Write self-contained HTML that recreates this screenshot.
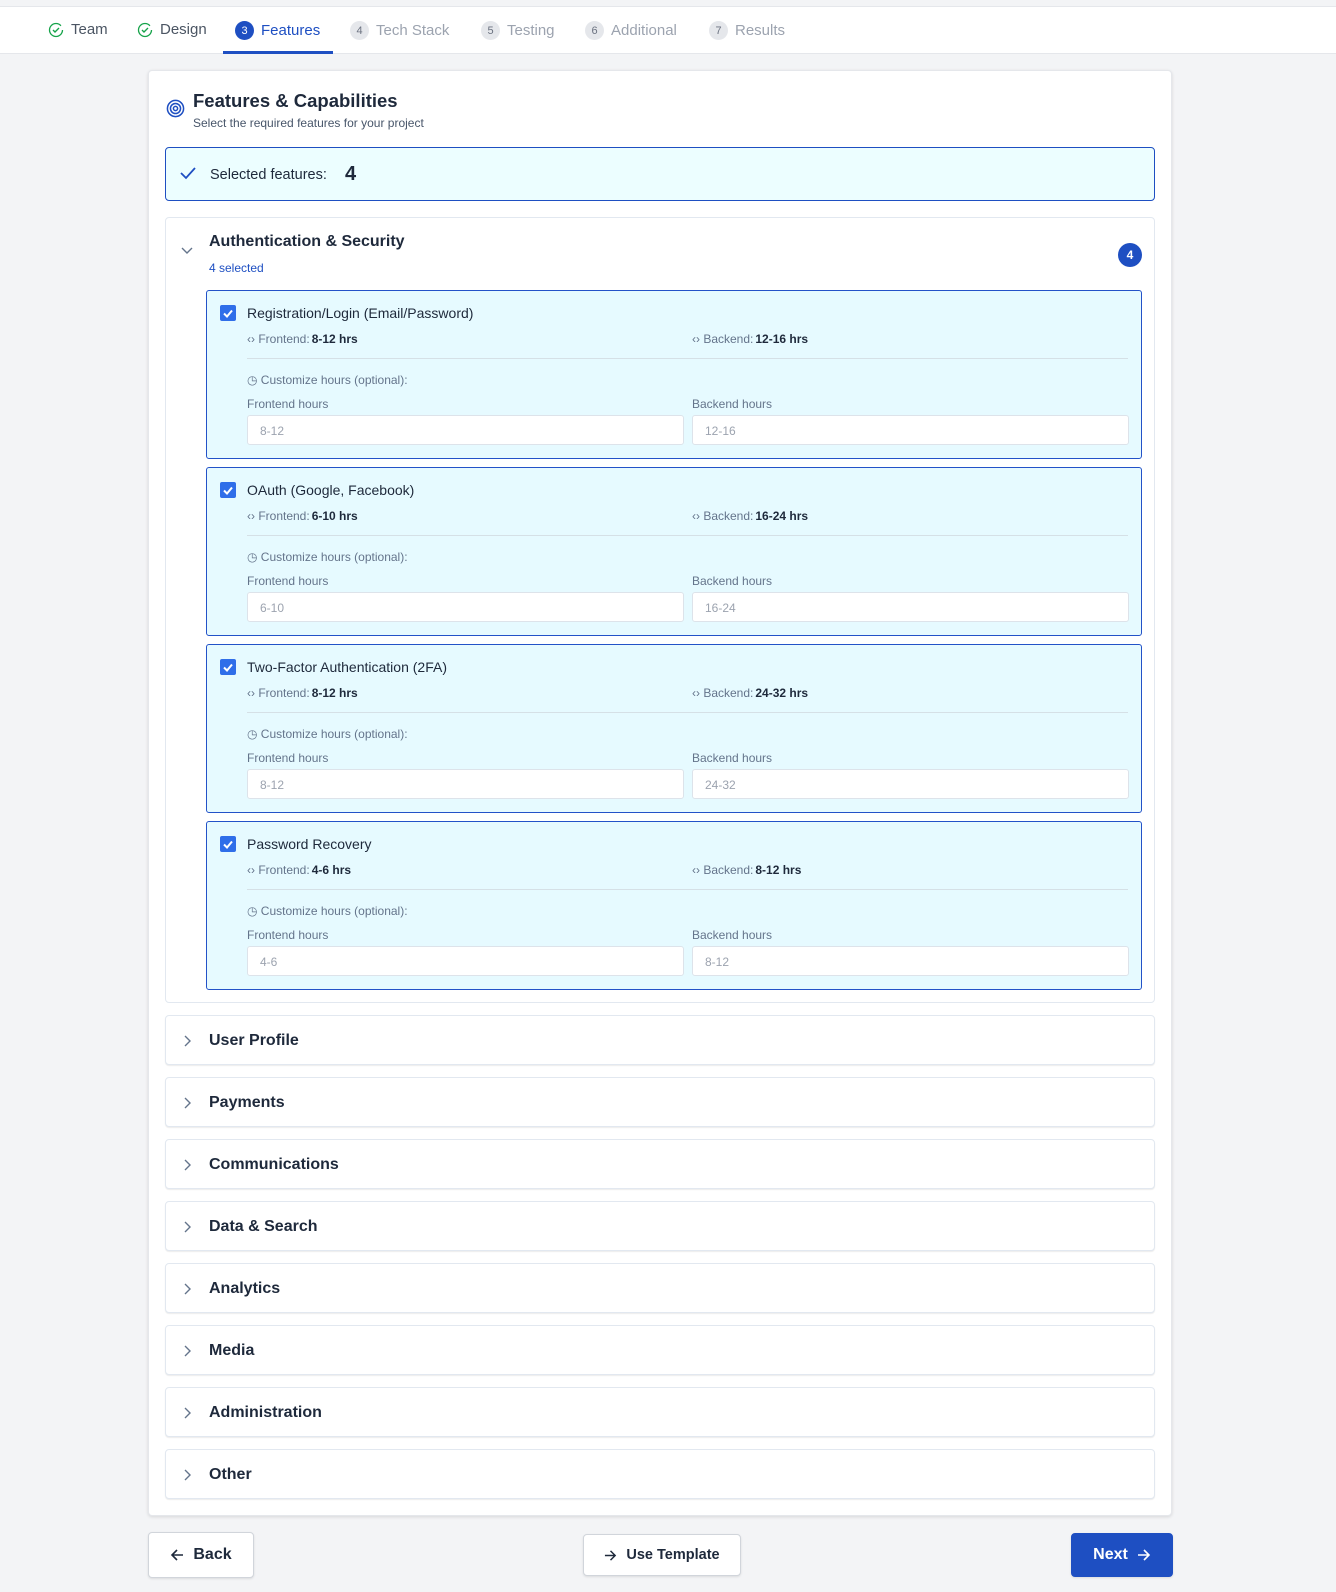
<!DOCTYPE html>
<html><head><meta charset="utf-8"><style>
*{box-sizing:border-box;margin:0;padding:0}
body{width:1336px;height:1592px;background:#f3f4f6;font-family:"Liberation Sans",Arial,sans-serif;color:#1e293b;position:relative;overflow:hidden}
.nav{position:absolute;left:0;top:0;width:1336px;background:#fff;border-top:1px solid #e5e7eb;border-bottom:1px solid #e5e7eb;margin-top:6px;height:48px}
.step{position:absolute;top:14px;font-size:15px;color:#9ca3af;display:flex;align-items:center;gap:7px;white-space:nowrap}
.num{width:19px;height:19px;border-radius:50%;background:#e5e7eb;color:#6b7280;font-size:11px;display:flex;align-items:center;justify-content:center}
.card{position:absolute;left:148px;top:70px;width:1024px;height:1446px;background:#fff;border:1px solid #e5e7eb;border-radius:4px;box-shadow:0 1px 3px rgba(0,0,0,.12)}
.abs{position:absolute}
.sel{left:165px;top:147px;width:990px;height:54px;background:#ecfeff;border:1px solid #1e4fc2;border-radius:4px}
.auth{left:165px;top:217px;width:990px;height:786px;border:1px solid #e2e8f0;border-radius:4px;background:#fff}
.item{position:absolute;left:40px;width:936px;height:169px;background:#e6faff;border:1px solid #2352c8;border-radius:3px}
.cb{position:absolute;left:13px;top:14px;width:16px;height:16px;background:#2f6ee9;border-radius:2px}
.it{position:absolute;left:40px;top:14px;font-size:14px;color:#1e293b}
.meta{position:absolute;top:41px;font-size:12px;color:#64748b}
.meta b{color:#1e293b;font-weight:600;margin-left:2px}
.div{position:absolute;left:40px;right:13px;top:67px;border-top:1px solid #d5e0e6}
.cust{position:absolute;left:40px;top:82px;font-size:12px;color:#64748b}
.lab{position:absolute;top:106px;font-size:12px;color:#64748b}
.inp{position:absolute;top:124px;width:437px;height:30px;background:#fff;border:1px solid #dde3ea;border-radius:3px;font-size:12px;color:#9ca3af;padding:8px 12px}
.col{position:absolute;left:165px;width:990px;height:50px;background:#fff;border:1px solid #e2e8f0;border-radius:4px;box-shadow:0 1px 1px rgba(0,0,0,.08)}
.col span{position:absolute;left:43px;top:16px;font-size:16px;font-weight:bold;color:#1e293b}
.col svg{position:absolute;left:16px;top:18px}
.btn{position:absolute;background:#fff;border:1px solid #d1d5db;border-radius:4px;font-size:16px;font-weight:bold;color:#1e293b;display:flex;align-items:center;justify-content:center;gap:9px;box-shadow:0 1px 2px rgba(0,0,0,.1)}
</style></head><body>
<div class="nav">
 <div class="step" style="left:48px;color:#4b5563"><svg width="16" height="16" viewBox="0 0 16 16"><circle cx="8" cy="8" r="6.5" fill="none" stroke="#16a34a" stroke-width="1.3" stroke-dasharray="36 5"/><path d="M5 8l2 2 4-4" fill="none" stroke="#16a34a" stroke-width="1.4"/></svg>Team</div>
 <div class="step" style="left:137px;color:#4b5563"><svg width="16" height="16" viewBox="0 0 16 16"><circle cx="8" cy="8" r="6.5" fill="none" stroke="#16a34a" stroke-width="1.3" stroke-dasharray="36 5"/><path d="M5 8l2 2 4-4" fill="none" stroke="#16a34a" stroke-width="1.4"/></svg>Design</div>
 <div class="step" style="left:235px;color:#1e4fc2"><span class="num" style="background:#1e4fc2;color:#fff">3</span>Features</div>
 <div class="abs" style="left:223px;top:44px;width:110px;height:3px;background:#1e4fc2"></div>
 <div class="step" style="left:350px"><span class="num">4</span>Tech Stack</div>
 <div class="step" style="left:481px"><span class="num">5</span>Testing</div>
 <div class="step" style="left:585px"><span class="num">6</span>Additional</div>
 <div class="step" style="left:709px"><span class="num">7</span>Results</div>
</div>
<div class="card"></div>
<svg class="abs" style="left:166px;top:99px" width="19" height="19" viewBox="0 0 20 20"><circle cx="10" cy="10" r="8.5" fill="none" stroke="#1e4fc2" stroke-width="1.6"/><circle cx="10" cy="10" r="5.3" fill="none" stroke="#1e4fc2" stroke-width="1.6"/><circle cx="10" cy="10" r="2.2" fill="none" stroke="#1e4fc2" stroke-width="1.6"/></svg>
<div class="abs" style="left:193px;top:90px;font-size:18.5px;font-weight:bold">Features &amp; Capabilities</div>
<div class="abs" style="left:193px;top:116px;font-size:12px;color:#475569">Select the required features for your project</div>
<div class="abs sel"><svg class="abs" style="left:14px;top:18px" width="16" height="14" viewBox="0 0 16 14"><path d="M1 7l5 5L15 2" fill="none" stroke="#1e4fc2" stroke-width="1.8"/></svg><span class="abs" style="left:44px;top:19px;font-size:14.5px">Selected features:</span><span class="abs" style="left:179px;top:15px;font-size:20px;font-weight:bold">4</span></div>
<div class="abs auth">
 <svg class="abs" style="left:14px;top:28px" width="14" height="10" viewBox="0 0 14 10"><path d="M2 2l5 5 5-5" fill="none" stroke="#64748b" stroke-width="1.4"/></svg>
 <div class="abs" style="left:43px;top:15px;font-size:16px;font-weight:bold">Authentication &amp; Security</div>
 <div class="abs" style="left:43px;top:43px;font-size:12px;color:#1e4fc2">4 selected</div>
 <div class="abs" style="left:952px;top:25px;width:24px;height:24px;border-radius:50%;background:#1e4fc2;color:#fff;font-size:12px;font-weight:bold;display:flex;align-items:center;justify-content:center">4</div>
 <div class="item" style="top:72px"><div class="cb"><svg width="16" height="16" viewBox="0 0 16 16"><path d="M4 8.5l3 3 5-6" fill="none" stroke="#fff" stroke-width="2"/></svg></div><div class="it">Registration/Login (Email/Password)</div>
  <div class="meta" style="left:40px">‹› Frontend:<b>8-12 hrs</b></div><div class="meta" style="left:485px">‹› Backend:<b>12-16 hrs</b></div>
  <div class="div"></div><div class="cust">◷ Customize hours (optional):</div>
  <div class="lab" style="left:40px">Frontend hours</div><div class="lab" style="left:485px">Backend hours</div>
  <div class="inp" style="left:40px">8-12</div><div class="inp" style="left:485px">12-16</div></div>
 <div class="item" style="top:249px"><div class="cb"><svg width="16" height="16" viewBox="0 0 16 16"><path d="M4 8.5l3 3 5-6" fill="none" stroke="#fff" stroke-width="2"/></svg></div><div class="it">OAuth (Google, Facebook)</div>
  <div class="meta" style="left:40px">‹› Frontend:<b>6-10 hrs</b></div><div class="meta" style="left:485px">‹› Backend:<b>16-24 hrs</b></div>
  <div class="div"></div><div class="cust">◷ Customize hours (optional):</div>
  <div class="lab" style="left:40px">Frontend hours</div><div class="lab" style="left:485px">Backend hours</div>
  <div class="inp" style="left:40px">6-10</div><div class="inp" style="left:485px">16-24</div></div>
 <div class="item" style="top:426px"><div class="cb"><svg width="16" height="16" viewBox="0 0 16 16"><path d="M4 8.5l3 3 5-6" fill="none" stroke="#fff" stroke-width="2"/></svg></div><div class="it">Two-Factor Authentication (2FA)</div>
  <div class="meta" style="left:40px">‹› Frontend:<b>8-12 hrs</b></div><div class="meta" style="left:485px">‹› Backend:<b>24-32 hrs</b></div>
  <div class="div"></div><div class="cust">◷ Customize hours (optional):</div>
  <div class="lab" style="left:40px">Frontend hours</div><div class="lab" style="left:485px">Backend hours</div>
  <div class="inp" style="left:40px">8-12</div><div class="inp" style="left:485px">24-32</div></div>
 <div class="item" style="top:603px"><div class="cb"><svg width="16" height="16" viewBox="0 0 16 16"><path d="M4 8.5l3 3 5-6" fill="none" stroke="#fff" stroke-width="2"/></svg></div><div class="it">Password Recovery</div>
  <div class="meta" style="left:40px">‹› Frontend:<b>4-6 hrs</b></div><div class="meta" style="left:485px">‹› Backend:<b>8-12 hrs</b></div>
  <div class="div"></div><div class="cust">◷ Customize hours (optional):</div>
  <div class="lab" style="left:40px">Frontend hours</div><div class="lab" style="left:485px">Backend hours</div>
  <div class="inp" style="left:40px">4-6</div><div class="inp" style="left:485px">8-12</div></div>
</div>
<div class="col" style="top:1015px"><svg width="10" height="14" viewBox="0 0 10 14"><path d="M3 2l5 5-5 5" fill="none" stroke="#64748b" stroke-width="1.4"/></svg><span>User Profile</span></div>
<div class="col" style="top:1077px"><svg width="10" height="14" viewBox="0 0 10 14"><path d="M3 2l5 5-5 5" fill="none" stroke="#64748b" stroke-width="1.4"/></svg><span>Payments</span></div>
<div class="col" style="top:1139px"><svg width="10" height="14" viewBox="0 0 10 14"><path d="M3 2l5 5-5 5" fill="none" stroke="#64748b" stroke-width="1.4"/></svg><span>Communications</span></div>
<div class="col" style="top:1201px"><svg width="10" height="14" viewBox="0 0 10 14"><path d="M3 2l5 5-5 5" fill="none" stroke="#64748b" stroke-width="1.4"/></svg><span>Data &amp; Search</span></div>
<div class="col" style="top:1263px"><svg width="10" height="14" viewBox="0 0 10 14"><path d="M3 2l5 5-5 5" fill="none" stroke="#64748b" stroke-width="1.4"/></svg><span>Analytics</span></div>
<div class="col" style="top:1325px"><svg width="10" height="14" viewBox="0 0 10 14"><path d="M3 2l5 5-5 5" fill="none" stroke="#64748b" stroke-width="1.4"/></svg><span>Media</span></div>
<div class="col" style="top:1387px"><svg width="10" height="14" viewBox="0 0 10 14"><path d="M3 2l5 5-5 5" fill="none" stroke="#64748b" stroke-width="1.4"/></svg><span>Administration</span></div>
<div class="col" style="top:1449px"><svg width="10" height="14" viewBox="0 0 10 14"><path d="M3 2l5 5-5 5" fill="none" stroke="#64748b" stroke-width="1.4"/></svg><span>Other</span></div>
<div class="btn" style="left:148px;top:1532px;width:106px;height:46px"><svg width="14" height="14" viewBox="0 0 14 14"><path d="M13 7H2M7 2L2 7l5 5" fill="none" stroke="#1e293b" stroke-width="1.6"/></svg>Back</div>
<div class="btn" style="left:583px;top:1534px;width:158px;height:42px;font-size:14.5px;font-weight:600"><svg width="13" height="13" viewBox="0 0 14 14"><path d="M1 7h11M7 2l5 5-5 5" fill="none" stroke="#1e293b" stroke-width="1.6"/></svg>Use Template</div>
<div class="btn" style="left:1071px;top:1533px;width:102px;height:44px;background:#1e4fc2;border-color:#1e4fc2;color:#fff">Next<svg width="14" height="14" viewBox="0 0 14 14"><path d="M1 7h11M7 2l5 5-5 5" fill="none" stroke="#fff" stroke-width="1.6"/></svg></div>
</body></html>
